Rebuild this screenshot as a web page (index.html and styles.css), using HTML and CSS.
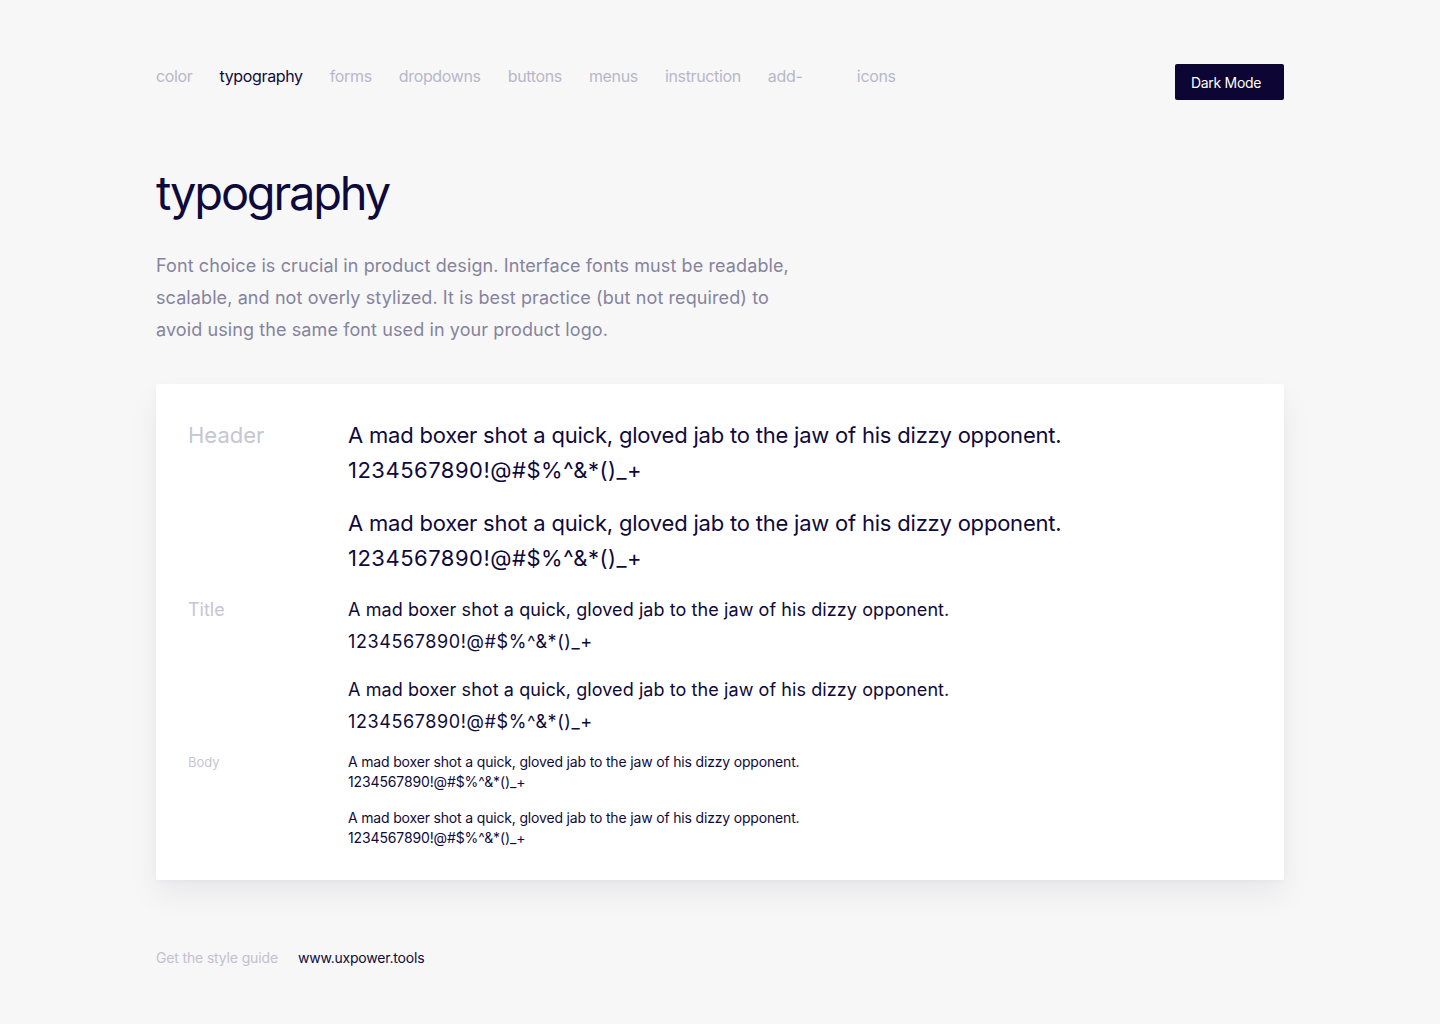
FILE: index.html
```html
<!DOCTYPE html>
<html lang="en">
<head>
<meta charset="utf-8">
<title>typography</title>
<link rel="stylesheet" href="styles.css">
</head>
<body>
<header class="topbar">
  <nav class="nav">
    <a class="nav-item">color</a>
    <a class="nav-item active">typography</a>
    <a class="nav-item">forms</a>
    <a class="nav-item">dropdowns</a>
    <a class="nav-item">buttons</a>
    <a class="nav-item">menus</a>
    <a class="nav-item">instruction</a>
    <a class="nav-item addons">add-</a>
    <a class="nav-item">icons</a>
  </nav>
  <button class="mode-btn">Dark Mode</button>
</header>

<main>
  <h1 class="page-title">typography</h1>
  <p class="intro">Font choice is crucial in product design. Interface fonts must be readable, scalable, and not overly stylized. It is best practice (but not required) to avoid using the same font used in your product logo.</p>

  <section class="card">
    <div class="row row-header">
      <div class="label">Header</div>
      <div class="samples">
        <p class="sample"><span class="words">A mad boxer shot a quick, gloved jab to the jaw of his dizzy opponent.</span><br><span class="nums">1234567890!@#$%^&amp;*()_+</span></p>
        <p class="sample"><span class="words">A mad boxer shot a quick, gloved jab to the jaw of his dizzy opponent.</span><br><span class="nums">1234567890!@#$%^&amp;*()_+</span></p>
      </div>
    </div>
    <div class="row row-title">
      <div class="label">Title</div>
      <div class="samples">
        <p class="sample"><span class="words">A mad boxer shot a quick, gloved jab to the jaw of his dizzy opponent.</span><br><span class="nums">1234567890!@#$%^&amp;*()_+</span></p>
        <p class="sample"><span class="words">A mad boxer shot a quick, gloved jab to the jaw of his dizzy opponent.</span><br><span class="nums">1234567890!@#$%^&amp;*()_+</span></p>
      </div>
    </div>
    <div class="row row-body">
      <div class="label">Body</div>
      <div class="samples">
        <p class="sample"><span class="words">A mad boxer shot a quick, gloved jab to the jaw of his dizzy opponent.</span><br><span class="nums">1234567890!@#$%^&amp;*()_+</span></p>
        <p class="sample"><span class="words">A mad boxer shot a quick, gloved jab to the jaw of his dizzy opponent.</span><br><span class="nums">1234567890!@#$%^&amp;*()_+</span></p>
      </div>
    </div>
  </section>
</main>

<footer class="footer">
  <span class="footer-note">Get the style guide</span>
  <a class="footer-link">www.uxpower.tools</a>
</footer>
</body>
</html>
```

FILE: styles.css
```css
* { box-sizing: border-box; }

html, body {
  margin: 0;
  padding: 0;
}

body {
  background: #f7f7f7;
  font-family: Inter, "Noto Sans", sans-serif;
  color: #0f0a3c;
  padding: 64px 156px 0 156px;
  min-height: 1024px;
}

.topbar {
  display: flex;
  justify-content: space-between;
  align-items: flex-start;
}

.nav {
  display: flex;
  gap: 27px;
}

.nav-item {
  font-size: 16px;
  line-height: 24px;
  letter-spacing: -0.35px;
  color: #b8b7c9;
  text-decoration: none;
}

.nav-item.active {
  color: #0f0a3c;
}

.nav-item.addons {
  width: 62px;
}

.mode-btn {
  width: 109px;
  height: 36px;
  background: #0d0533;
  color: #ffffff;
  border: none;
  border-radius: 2px;
  font-family: Inter, "Noto Sans", sans-serif;
  font-size: 14px;
  letter-spacing: -0.3px;
  padding: 0 0 0 16px;
  text-align: left;
  cursor: pointer;
}

.page-title {
  margin: 64px 0 0 0;
  font-size: 47px;
  font-weight: 400;
  line-height: 58px;
  letter-spacing: -2.2px;
  color: #0f0a3c;
}

.intro {
  margin: 28px 0 0 0;
  width: 660px;
  font-size: 18px;
  line-height: 32px;
  letter-spacing: 0.1px;
  color: #85839e;
}

.card {
  margin-top: 38px;
  background: #ffffff;
  border-radius: 2px;
  box-shadow: 0 16px 32px rgba(15, 10, 60, 0.06), 0 2px 6px rgba(15, 10, 60, 0.03);
  padding: 34px 32px 32px 32px;
}

.row {
  display: flex;
}

.row-title {
  margin-top: 18px;
}

.row-body {
  margin-top: 14px;
}

.label {
  width: 160px;
  flex: none;
  color: #c6c5d3;
}

.samples {
  display: flex;
  flex-direction: column;
}

.sample {
  margin: 0;
  color: #0f0a3c;
}

.row-header .label,
.row-header .sample {
  font-size: 22px;
  line-height: 35px;
}

.row-header .words { letter-spacing: -0.21px; }
.row-header .nums { letter-spacing: 0.5px; }

.row-header .sample + .sample {
  margin-top: 18px;
}

.row-title .label,
.row-title .sample {
  font-size: 18px;
  line-height: 32px;
}

.row-title .words { letter-spacing: 0.08px; }
.row-title .nums { letter-spacing: 0.6px; }

.row-title .sample + .sample {
  margin-top: 16px;
}

.row-body .label {
  font-size: 13px;
  line-height: 20px;
}

.row-body .sample {
  font-size: 14px;
  line-height: 20px;
}

.row-body .words { letter-spacing: -0.17px; }
.row-body .nums { letter-spacing: -0.13px; }

.row-body .sample + .sample {
  margin-top: 16px;
}

.footer {
  margin-top: 68px;
  display: flex;
  gap: 20px;
  font-size: 14px;
  line-height: 20px;
}

.footer-note {
  color: #c2c1cf;
  letter-spacing: -0.15px;
}

.footer-link {
  color: #0f0a3c;
  text-decoration: none;
  letter-spacing: -0.2px;
}
```
